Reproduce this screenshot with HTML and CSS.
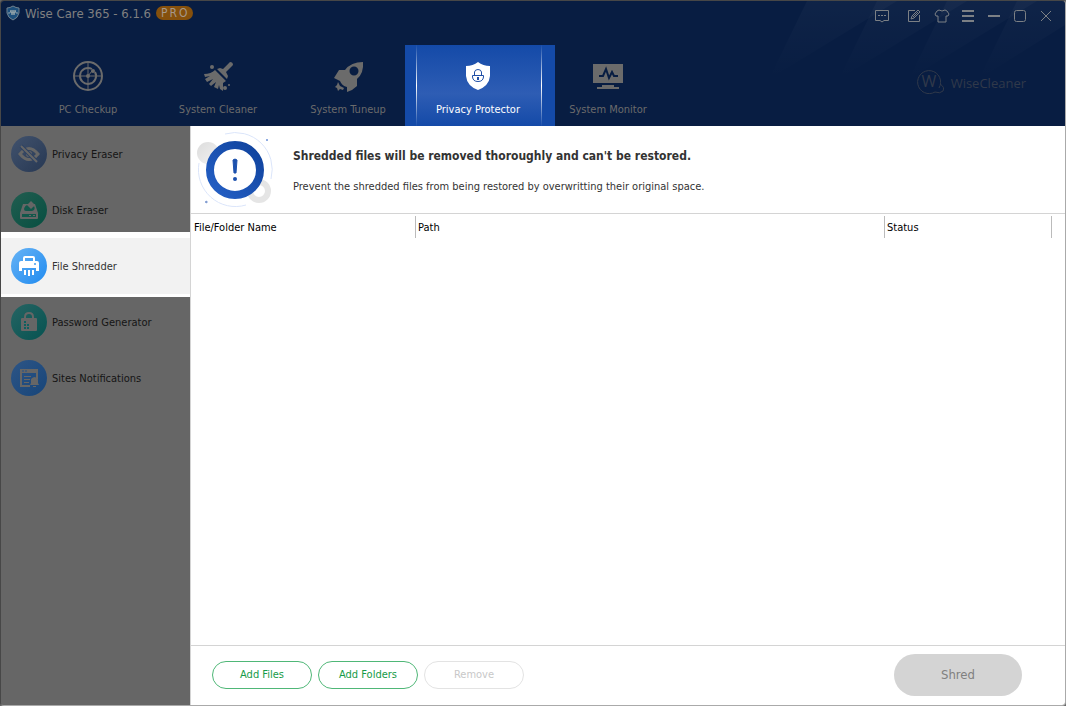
FILE: index.html
```html
<!DOCTYPE html>
<html lang="en">
<head>
    <meta charset="UTF-8">
    <meta name="viewport" content="width=device-width, initial-scale=1.0">
    <title>Wise Care 365</title>
    <link rel="stylesheet" href="styles.css">
</head>
<body>

<div class="window">
    <header class="header">
        <!-- Light rays -->
        <svg class="rays" width="296" height="80" viewBox="0 0 296 80">
            <defs>
                <linearGradient id="ray" x1="0" y1="0" x2="0" y2="1">
                    <stop offset="0" stop-color="#fff" stop-opacity="0.03"/>
                    <stop offset="1" stop-color="#fff" stop-opacity="0"/>
                </linearGradient>
            </defs>
            <path fill="url(#ray)" d="M38 0H128L0 78Z"/>
            <path fill="url(#ray)" d="M108 0H198L70 78Z"/>
            <path fill="url(#ray)" d="M178 0H268L140 78Z"/>
            <path fill="url(#ray)" d="M248 0H296V24L210 78Z"/>
        </svg>

        <div class="titlebar">
            <div class="app-title">
                <svg width="14" height="16" viewBox="0 0 14 16">
                    <path d="M7 1Q10 3 13 3V8Q12 13 7 15Q2 13 1 8V3Q4 3 7 1Z" fill="#1d4f7c" stroke="#71828f"/>
                    <path d="M2 8H4L5 5L6 10L7 5L8 10L9 5L10 8H12" fill="none" stroke="#8ea0a8"/>
                </svg>
                <span>Wise Care 365 - 6.1.6</span>
                <span class="badge">PRO</span>
            </div>
            <div class="tools">
                <button class="tool tool-chat" aria-label="Feedback">
                    <svg width="16" height="16" viewBox="0 0 16 16"><path d="M1.500 2.500H14.500V12.500H10L8 14L6 12.500H1.500Z"/><path d="M4 7.500H6M7 7.500H9M10 7.500H12"/></svg>
                </button>
                <button class="tool tool-edit" aria-label="Edit">
                    <svg width="16" height="16" viewBox="0 0 16 16"><path d="M9 2.500H2.500V13.500H13.500V7"/><path d="M5 11L6 8L12 2L14 4L8 10ZM7 9L12 4"/></svg>
                </button>
                <button class="tool" aria-label="Skin">
                    <svg width="16" height="16" viewBox="0 0 16 16"><path d="M5 2Q8 4 11 2L13 3L15 6L14 8H12V14H4V8H2L1 6L3 3Z"/></svg>
                </button>
                <button class="tool" aria-label="Menu">
                    <svg width="16" height="16" viewBox="0 0 16 16"><path class="thick" d="M2 3H14M2 8H14M2 13H14"/></svg>
                </button>
                <button class="tool" aria-label="Minimize">
                    <svg width="16" height="16" viewBox="0 0 16 16"><path class="thick" d="M2 8H14"/></svg>
                </button>
                <button class="tool" aria-label="Maximize">
                    <svg width="16" height="16" viewBox="0 0 16 16"><rect x="2.500" y="2.500" width="11" height="11" rx="2"/></svg>
                </button>
                <button class="tool" aria-label="Close">
                    <svg width="16" height="16" viewBox="0 0 16 16"><path d="M3 3L13 13M13 3L3 13"/></svg>
                </button>
            </div>
        </div>

        <nav class="tabs">
            <button class="tab">
                <svg width="32" height="32" viewBox="0 0 32 32">
                    <g fill="none" stroke="currentColor" stroke-width="2">
                        <circle cx="16" cy="16" r="14"/>
                        <path d="M20 9A8 8 0 1 0 23 12"/>
                        <path stroke-width="1" d="M16 2V30M2 16H30M16 16L20 11"/>
                    </g>
                    <circle cx="16" cy="16" r="2" fill="currentColor"/>
                    <circle cx="21" cy="11" r="2" fill="currentColor"/>
                </svg>
                PC Checkup
            </button>
            <button class="tab">
                <svg width="32" height="32" viewBox="0 0 32 32" fill="currentColor">
                    <path d="M28 2Q31 2 31 5L24 12L26 16L25 19L15 9L18 8L21 9Z"/>
                    <path d="M13 10L24 21L21 23L21 31L18 29L17 25L16 29L12 27L14 22L9 26L7 24L11 19L5 22L3 19L8 16L3 17L2 14Q9 14 13 10Z"/>
                    <circle cx="10" cy="7" r="2"/>
                    <circle cx="23" cy="28" r="2"/>
                    <circle cx="27" cy="25" r="1"/>
                </svg>
                System Cleaner
            </button>
            <button class="tab">
                <svg width="32" height="32" viewBox="0 0 32 32" fill="currentColor">
                    <path fill-rule="evenodd" d="M31 2Q32 13 25 19V26L20 30L15 32L15 27Q10 26 8 21L2 18L7 10H13Q19 2 31 2ZM22 6.500A4.500 4.500 0 1 0 22 15.500A4.500 4.500 0 1 0 22 6.500Z"/>
                    <path d="M6 22L8 26L12 28L11 30L8 29L6 31L5 28L3 27L5 25Z"/>
                </svg>
                System Tuneup
            </button>
            <button class="tab active">
                <svg width="32" height="32" viewBox="0 0 32 32">
                    <path d="M16 2Q21 6 28 6V16Q27 26 16 30Q5 26 4 16V6Q11 6 16 2Z" fill="#fff"/>
                    <g fill="none" stroke="#1f4fa6">
                        <path d="M10.500 15.500H21.500V17Q21 21.500 16 21.500Q11 21.500 10.500 17Z"/>
                        <path d="M12.500 15V12Q13 9.500 16 9.500Q19 9.500 19.500 12V15"/>
                        <path d="M16 17V20" stroke-width="2"/>
                    </g>
                </svg>
                <span>Privacy Protector</span>
            </button>
            <button class="tab">
                <svg width="32" height="32" viewBox="0 0 32 32" fill="currentColor">
                    <path d="M1 4H31V23H1Z"/>
                    <path d="M10 25H22V27H27V29H5V27H10Z"/>
                    <path d="M7 16H11L14 9L17 18L20 12L22 16H26" fill="none" stroke="#081d42" stroke-width="2"/>
                </svg>
                System Monitor
            </button>
            <a class="brand" href="#">
                <svg width="28" height="28" viewBox="0 0 28 28">
                    <path d="M22 19A11.500 11.500 0 1 0 18 23Q23 25 26 22Q28 18 23 15" fill="none" stroke="#30394a"/>
                    <text x="12" y="18" text-anchor="middle">W</text>
                </svg>
                WiseCleaner
            </a>
        </nav>
    </header>

    <div class="body">
        <nav class="sidebar">
            <a class="item" href="#">
                <span class="disc slate">
                    <svg width="24" height="24" viewBox="0 0 24 24">
                        <path d="M3 12Q12 1 21 12Q12 23 3 12Z" fill="none" stroke="currentColor" stroke-width="3"/>
                        <circle cx="12" cy="12" r="3" fill="currentColor"/>
                        <path d="M4 4L20 20" stroke="#2f4363" stroke-width="4"/>
                        <path d="M4 4L20 20" stroke="currentColor" stroke-width="2"/>
                    </svg>
                </span>
                Privacy Eraser
            </a>
            <a class="item" href="#">
                <span class="disc green">
                    <svg width="24" height="24" viewBox="0 0 24 24">
                        <path d="M6 6H18L21 15V20Q21 21 20 21H4Q3 21 3 20V15Z" fill="currentColor"/>
                        <path d="M7 11Q8 7 11 7L14 10L17 8Q19 12 15 13H9Q7 13 7 11Z" fill="#12584b"/>
                        <path d="M10 7L14 3L18 7L14 11Z" fill="currentColor"/>
                        <path d="M5 16H19V19H5Z" fill="#12584b"/>
                        <path d="M12 17.500H14M16 17.500H18" stroke="currentColor"/>
                    </svg>
                </span>
                Disk Eraser
            </a>
            <a class="item active" href="#">
                <span class="disc sky">
                    <svg width="24" height="24" viewBox="0 0 24 24">
                        <path d="M7 7V4Q7 3 8 3H16Q17 3 17 4V7" fill="none" stroke="currentColor" stroke-width="2"/>
                        <path d="M4 7H20Q22 7 22 9V17H19V14H5V17H2V9Q2 7 4 7Z" fill="currentColor"/>
                        <path d="M8 16V21M12 16V22M16 16V21" stroke="currentColor" stroke-width="2"/>
                        <circle cx="18" cy="10" r="1" fill="#3f9cf2"/>
                    </svg>
                </span>
                File Shredder
            </a>
            <a class="item" href="#">
                <span class="disc teal">
                    <svg width="24" height="24" viewBox="0 0 24 24">
                        <path d="M8 9V7Q8 3 12 3Q16 3 16 7V9" fill="none" stroke="currentColor" stroke-width="2"/>
                        <rect x="4" y="8" width="16" height="13" rx="1" fill="currentColor"/>
                        <path d="M8 11V20M11 14V20" stroke="#0e605f" stroke-width="2" stroke-dasharray="2 1"/>
                    </svg>
                </span>
                Password Generator
            </a>
            <a class="item" href="#">
                <span class="disc blue">
                    <svg width="24" height="24" viewBox="0 0 24 24">
                        <path d="M3 3H21V13H19V7H5V19H13V21H3Z" fill="currentColor"/>
                        <path d="M5 5H7M8 5H10" stroke="#235087" stroke-width="1"/>
                        <path d="M7 10.500H14M7 13.500H13M7 16.500H12" stroke="currentColor"/>
                        <path d="M13 19L14 17V14Q14 12 17.500 11Q21 12 21 14V17L22 19ZM16 20H19V21H16Z" fill="currentColor"/>
                    </svg>
                </span>
                Sites Notifications
            </a>
        </nav>

        <main class="main">
            <section class="banner">
                <svg width="80" height="76" viewBox="0 0 80 76">
                    <defs>
                        <linearGradient id="ring" x1="1" y1="0" x2="0" y2="1">
                            <stop offset="0" stop-color="#0f429c"/>
                            <stop offset="1" stop-color="#2560c6"/>
                        </linearGradient>
                        <linearGradient id="ball" x1="0" y1="0" x2="1" y2="1">
                            <stop offset="0" stop-color="#dcdcdc"/>
                            <stop offset="1" stop-color="#f3f3f3"/>
                        </linearGradient>
                    </defs>
                    <circle cx="13" cy="21" r="11" fill="url(#ball)"/>
                    <path d="M30 2A37 37 0 0 1 76 47M51 73A37 37 0 0 1 4 31" fill="none" stroke="#dbe5fa"/>
                    <circle cx="64" cy="59" r="9" fill="none" stroke="#e5e5e5" stroke-width="6"/>
                    <circle cx="40" cy="38" r="25" fill="#fff" stroke="url(#ring)" stroke-width="8"/>
                    <path d="M38 28Q40 26 42 28L41 41H39Z" fill="#1d51ad" stroke="#1d51ad" stroke-linejoin="round"/>
                    <circle cx="40" cy="47" r="2" fill="#1d51ad"/>
                    <path d="M71 7L73 9M73 7L71 9M10 70L12 69V71Z" stroke="#8fabe2"/>
                </svg>
                <div>
                    <h1>Shredded files will be removed thoroughly and can't be restored.</h1>
                    <p>Prevent the shredded files from being restored by overwritting their original space.</p>
                </div>
            </section>

            <section class="files">
                <table>
                    <thead>
                        <tr>
                            <th class="col-name">File/Folder Name</th>
                            <th class="col-path">Path</th>
                            <th class="col-status">Status</th>
                        </tr>
                    </thead>
                    <tbody></tbody>
                </table>
            </section>

            <footer class="actions">
                <button class="pill">Add Files</button>
                <button class="pill">Add Folders</button>
                <button class="pill" disabled>Remove</button>
                <button class="shred" disabled>Shred</button>
            </footer>
        </main>
    </div>
</div>

</body>
</html>
```
FILE: styles.css
```css
* {
    box-sizing: border-box;
}

body {
    margin: 0;
    background: #666;
    font-family: "DejaVu Sans Condensed", "DejaVu Sans", sans-serif;
    font-size: 11px;
    color: #333;
}

button {
    margin: 0;
    padding: 0;
    border: none;
    background: none;
    font: inherit;
    color: inherit;
    cursor: pointer;
}

a {
    color: inherit;
    text-decoration: none;
}

svg {
    display: block;
    flex: none;
}

.window {
    display: flex;
    flex-direction: column;
    min-height: 100vh;
    border: 1px solid #aaa;
    border-top-color: #474747;
    border-left-color: #474747;
    border-radius: 4px;
    overflow: hidden;
}

/* Header */
.header {
    position: relative;
    background: #081d42;
    color: #6b6b6b;
}

.rays {
    position: absolute;
    top: 0;
    right: 0;
}

.titlebar {
    position: relative;
    display: flex;
    justify-content: space-between;
    align-items: flex-start;
    height: 44px;
    padding: 0 6px 0 5px;
}

.app-title {
    display: flex;
    align-items: center;
    gap: 5px;
    height: 24px;
    font-size: 13px;
    color: #808080;
}

.badge {
    padding: 0 3px 0 5px;
    border-radius: 7px;
    background: #85500c;
    font-size: 12px;
    line-height: 14px;
    letter-spacing: 2px;
    color: #a5988a;
}

.tools {
    display: flex;
    height: 30px;
}

.tool {
    width: 26px;
    padding: 0 5px;
}

.tool-chat {
    margin-right: 6px;
}

.tool-edit {
    margin-right: 2px;
}

.tool svg {
    fill: none;
    stroke: #7c8085;
}

.tool .thick {
    stroke-width: 2;
}

.tabs {
    position: relative;
    display: flex;
    height: 81px;
    padding: 0 39px 0 22px;
}

.tab {
    display: flex;
    flex-direction: column;
    align-items: center;
    gap: 11px;
    width: 130px;
    padding-top: 15px;
    line-height: 14px;
}

.tab.active {
    position: relative;
    width: 150px;
    margin: 0 -12px 0 -8px;
    padding-right: 4px;
    background: linear-gradient(#144aa8, #2e5db4 60%, #144aa8);
    color: #fff;
}

/* Glowing side edges of the selected tab */
.tab.active::before,
.tab.active::after {
    content: "";
    position: absolute;
    top: 0;
    bottom: 0;
    width: 11px;
    background: #144aa8;
    border-style: solid;
    border-color: transparent;
    border-image: linear-gradient(#144aa8, #fff, #144aa8) 1;
}

.tab.active::before {
    left: 0;
    border-width: 0 1px 0 0;
}

.tab.active::after {
    right: 0;
    width: 13px;
    border-width: 0 0 0 1px;
}

.brand {
    display: flex;
    align-items: center;
    gap: 6px;
    margin: 0 0 5px auto;
    font-family: "Open Sans", sans-serif;
    font-size: 13px;
    color: #30394a;
}

.brand text {
    font-size: 16px;
    fill: #30394a;
}

/* Body */
.body {
    display: flex;
    flex: 1;
}

.sidebar {
    width: 189px;
    flex: none;
    background: #666;
    color: #151515;
}

.item {
    display: flex;
    align-items: center;
    gap: 5px;
    height: 56px;
    padding-left: 10px;
}

.item.active {
    position: relative;
    background: #f2f2f2;
    box-shadow: 0 -6px #fff, 0 3px #fff;
    color: #333;
}

.disc {
    display: flex;
    align-items: center;
    justify-content: center;
    width: 36px;
    height: 36px;
    border-radius: 50%;
    color: #666;
}

.slate {
    background: linear-gradient(135deg, #41526d, #273853);
}

.green {
    background: linear-gradient(135deg, #225d50, #064f41);
}

.sky {
    background: linear-gradient(135deg, #67b3f5, #208bf0);
    color: #fff;
}

.teal {
    background: linear-gradient(135deg, #266463, #065351);
}

.blue {
    background: linear-gradient(135deg, #2d5586, #174579);
}

.main {
    display: flex;
    flex: 1;
    flex-direction: column;
    border-left: 1px solid #d4d4d4;
    background: #fff;
}

.banner {
    display: flex;
    align-items: center;
    gap: 18px;
    height: 88px;
    padding-left: 4px;
    border-bottom: 1px solid #d4d4d4;
}

.banner h1 {
    margin: 2px 0 16px;
    font-size: 12px;
    line-height: 16px;
}

.banner p {
    margin: 0;
    line-height: 14px;
}

.files {
    flex: 1;
    padding: 2px 13px 0 1px;
}

table {
    width: 100%;
    border-collapse: collapse;
    table-layout: fixed;
}

th {
    height: 22px;
    padding: 0 0 0 2px;
    border-right: 1px solid #bbb;
    font-weight: normal;
    text-align: left;
    color: #000;
}

.col-name {
    width: 26%;
}

.col-status {
    width: 167px;
}

.actions {
    display: flex;
    align-items: center;
    gap: 6px;
    height: 60px;
    padding: 0 43px 2px 21px;
    border-top: 1px solid #d4d4d4;
}

.pill {
    width: 100px;
    height: 28px;
    border: 1px solid #4fb777;
    border-radius: 14px;
    color: #159b48;
}

.pill:disabled {
    border-color: #e3e3e3;
    color: #c8c8c8;
}

.shred {
    width: 128px;
    height: 42px;
    margin-left: auto;
    border-radius: 21px;
    background: #d4d4d4;
    font-size: 13px;
    color: #808080;
}
```
